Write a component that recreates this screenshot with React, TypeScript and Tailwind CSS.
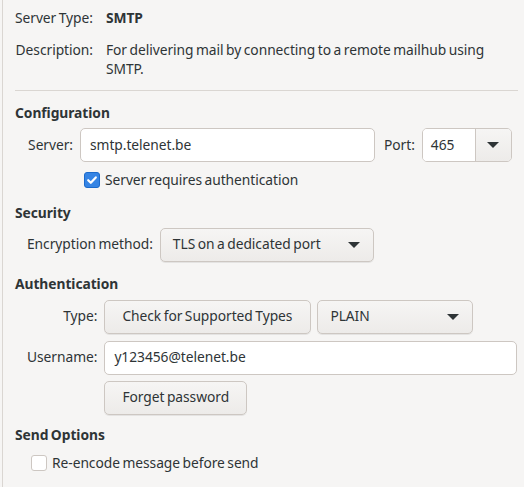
import React from "react";

const font = { fontFamily: '"Noto Sans", "Open Sans", sans-serif' };

// Small down-pointing triangle used by combo boxes
const Arrow = () => (
  <svg width="14" height="8" viewBox="0 0 14 8" className="shrink-0">
    <path d="M1 1h12L7 7z" fill="#2e3436" />
  </svg>
);

const Entry: React.FC<{ value: string; className?: string }> = ({ value, className = "" }) => (
  <div
    className={`h-[34px] flex items-center px-[9px] bg-white border border-[#cdc7c2] rounded-[5px] text-[#2e3436] ${className}`}
  >
    {value}
  </div>
);

const Button: React.FC<{ children: React.ReactNode; className?: string }> = ({ children, className = "" }) => (
  <div
    className={`h-[34px] flex items-center px-[17px] border border-[#cdc7c2] rounded-[5px] bg-gradient-to-b from-[#f6f5f4] to-[#edebe9] text-[#2e3436] shadow-[0_1px_0_rgba(0,0,0,0.07)] ${className}`}
  >
    {children}
  </div>
);

const Combo: React.FC<{ value: string; className?: string }> = ({ value, className = "" }) => (
  <div
    className={`h-[34px] flex items-center justify-between pl-[12px] pr-[12px] border border-[#cdc7c2] rounded-[5px] bg-gradient-to-b from-[#f6f5f4] to-[#edebe9] text-[#2e3436] shadow-[0_1px_0_rgba(0,0,0,0.07)] ${className}`}
  >
    <span>{value}</span>
    <Arrow />
  </div>
);

const Check: React.FC<{ checked?: boolean; label: string }> = ({ checked, label }) => (
  <div className="flex items-center gap-[5px]">
    {checked ? (
      <div className="w-[16px] h-[16px] rounded-[3px] bg-[#3584e4] border border-[#1b6acb] flex items-center justify-center">
        <svg width="12" height="12" viewBox="0 0 12 12">
          <path d="M2.2 6.2l2.6 2.6 5-5.4" stroke="white" strokeWidth="2.2" fill="none" strokeLinecap="round" strokeLinejoin="round" />
        </svg>
      </div>
    ) : (
      <div className="w-[16px] h-[16px] rounded-[3px] bg-white border border-[#cdc7c2]" />
    )}
    <span>{label}</span>
  </div>
);

const Heading: React.FC<{ children: React.ReactNode }> = ({ children }) => (
  <div className="font-bold text-[#2e3436] h-[20px] flex items-center">{children}</div>
);

export default function App() {
  return (
    <div
      style={font}
      className="w-[524px] h-[487px] bg-[#f6f5f4] text-[13.8px] tracking-[-0.05px] [word-spacing:-1px] text-[#2e3436] overflow-hidden"
    >
      <div className="h-full ml-[2px] border-l border-[#dad6d2] pl-[12px] pr-[6px]">
        {/* server summary */}
        <div className="grid grid-cols-[auto_1fr] gap-x-[13px] pt-[8px] pb-[12px] border-b border-[#dad6d2]">
          <div className="text-right leading-[20px]">Server Type:</div>
          <div className="font-bold leading-[20px]">SMTP</div>
          <div className="text-right leading-[19px] mt-[12px]">Description:</div>
          <div className="leading-[19px] mt-[12px]">
            For delivering mail by connecting to a remote mailhub using SMTP.
          </div>
        </div>

        {/* configuration */}
        <div className="mt-[12px]">
          <Heading>Configuration</Heading>
          <div className="pl-[12px] mt-[5px] flex items-center">
            <span className="w-[46px] mr-[7px] text-right">Server:</span>
            <Entry value="smtp.telenet.be" className="w-[295px]" />
            <span className="ml-[9px] mr-[7px]">Port:</span>
            <div className="h-[34px] w-[90px] flex border border-[#cdc7c2] rounded-[5px] overflow-hidden">
              <div className="flex-1 bg-white flex items-center pl-[8px]">465</div>
              <div className="w-[36px] border-l border-[#cdc7c2] bg-gradient-to-b from-[#f6f5f4] to-[#edebe9] flex items-center justify-center">
                <Arrow />
              </div>
            </div>
          </div>
          <div className="pl-[69px] mt-[8px]">
            <Check checked label="Server requires authentication" />
          </div>
        </div>

        {/* security */}
        <div className="mt-[13px]">
          <Heading>Security</Heading>
          <div className="pl-[12px] mt-[4px] flex items-center">
            <span className="mr-[7px]">Encryption method:</span>
            <Combo value="TLS on a dedicated port" className="w-[214px]" />
          </div>
        </div>

        {/* authentication */}
        <div className="mt-[13px]">
          <Heading>Authentication</Heading>
          <div className="pl-[12px] mt-[5px] grid grid-cols-[auto_1fr] gap-x-[7px] items-center">
            <span className="text-right">Type:</span>
            <div className="flex gap-[6px]">
              <Button className="pr-[18px]">Check for Supported Types</Button>
              <Combo value="PLAIN" className="w-[156px]" />
            </div>
            <span className="text-right mt-[7px]">Username:</span>
            <Entry value="y123456@telenet.be" className="w-[413px] mt-[7px]" />
            <span />
            <div className="flex mt-[6px]">
              <Button>Forget password</Button>
            </div>
          </div>
        </div>

        {/* send options */}
        <div className="mt-[11px]">
          <Heading>Send Options</Heading>
          <div className="pl-[16px] mt-[7px]">
            <Check label="Re-encode message before send" />
          </div>
        </div>
      </div>
    </div>
  );
}
